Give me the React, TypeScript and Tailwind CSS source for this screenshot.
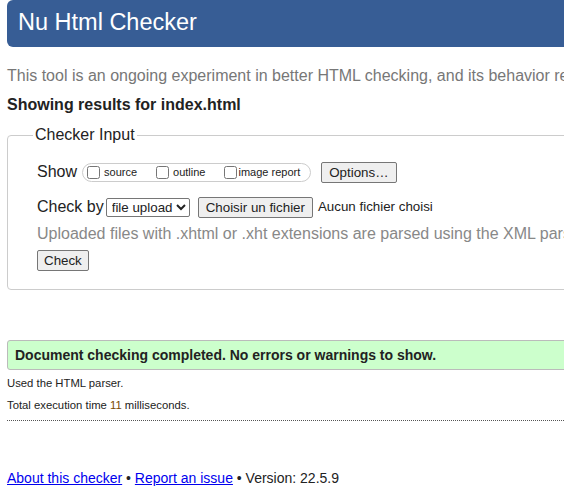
import React from "react";

const App: React.FC = () => {
  return (
    <div className="w-[564px] h-[502px] overflow-hidden bg-white font-['Liberation_Sans',Arial,sans-serif] text-[#222]">
      <div className="w-[1000px] pl-[7px]">
        {/* Header */}
        <div className="h-[47px] rounded-[6px] bg-[#375d95] pl-[11px] flex items-center">
          <h1 className="text-[23.5px] text-white leading-none mt-[-1px]">Nu Html Checker</h1>
        </div>

        <p className="mt-[19px] text-[16px] leading-[20px] text-[#777]">
          This tool is an ongoing experiment in better HTML checking, and its behavior remains subject to change
        </p>

        <p className="mt-[9px] text-[16px] leading-[20px] font-bold">Showing results for index.html</p>

        {/* Checker input */}
        <fieldset className="mt-[11px] h-[164px] border border-[#ccc] rounded-[4px] pl-[29px]">
          <legend className="ml-[-4px] px-[2px] text-[16px] leading-[18px]">Checker Input</legend>

          <div className="mt-[17px] flex items-center h-[22px]">
            <span className="text-[16px] mr-[5px]">Show</span>
            <div className="flex items-center h-[19px] border border-[#ccc] rounded-full pl-[1px] pr-[10px] text-[11px]">
              <label className="flex items-center mr-[16px]">
                <input type="checkbox" className="m-[3px] mr-[4px] w-[13px] h-[13px]" />
                source
              </label>
              <label className="flex items-center mr-[16px]">
                <input type="checkbox" className="m-[3px] mr-[4px] w-[13px] h-[13px]" />
                outline
              </label>
              <label className="flex items-center">
                <input type="checkbox" className="m-[3px] mr-[1px] w-[13px] h-[13px]" />
                image report
              </label>
            </div>
            <button className="ml-[10px] h-[21px] px-[7px] text-[13.33px] border border-[#767676] rounded-[2px] bg-[#efefef]">
              Options…
            </button>
          </div>

          <div className="mt-[13px] flex items-center h-[22px]">
            <span className="text-[16px] mr-[2px]">Check by</span>
            <select className="h-[19px] text-[13.33px] border border-[#767676] rounded-[2px] pl-[1px]">
              <option>file upload</option>
            </select>
            <button className="ml-[8px] h-[21px] px-[7px] text-[13.33px] border border-[#767676] rounded-[2px] bg-[#efefef]">
              Choisir un fichier
            </button>
            <span className="ml-[5px] text-[13.33px]">Aucun fichier choisi</span>
          </div>

          <p className="mt-[6px] text-[16px] leading-[20px] text-[#888]">
            Uploaded files with .xhtml or .xht extensions are parsed using the XML parser.
          </p>

          <button className="mt-[6px] h-[21px] px-[6px] text-[13.33px] border border-[#767676] rounded-[2px] bg-[#efefef]">
            Check
          </button>
        </fieldset>

        {/* Result */}
        <div className="mt-[50px] h-[30px] flex items-center pl-[7px] bg-[#ccffcc] border border-[#bbb] rounded-[3px]">
          <p className="text-[14px] font-bold">Document checking completed. No errors or warnings to show.</p>
        </div>

        <p className="mt-[5px] text-[11.3px] leading-[16px]">Used the HTML parser.</p>
        <p className="mt-[6px] text-[11.3px] leading-[16px]">
          Total execution time <span className="text-[#7a4a00]">11</span> milliseconds.
        </p>
        <div className="mt-[7px] w-[557px] border-t border-dotted border-[#555]" />

        <p className="mt-[48px] text-[14px] leading-[18px]">
          <a href="#" className="text-[#0000ee] underline">About this checker</a> •{" "}
          <a href="#" className="text-[#0000ee] underline">Report an issue</a> • Version: 22.5.9
        </p>
      </div>
    </div>
  );
};

export default App;
